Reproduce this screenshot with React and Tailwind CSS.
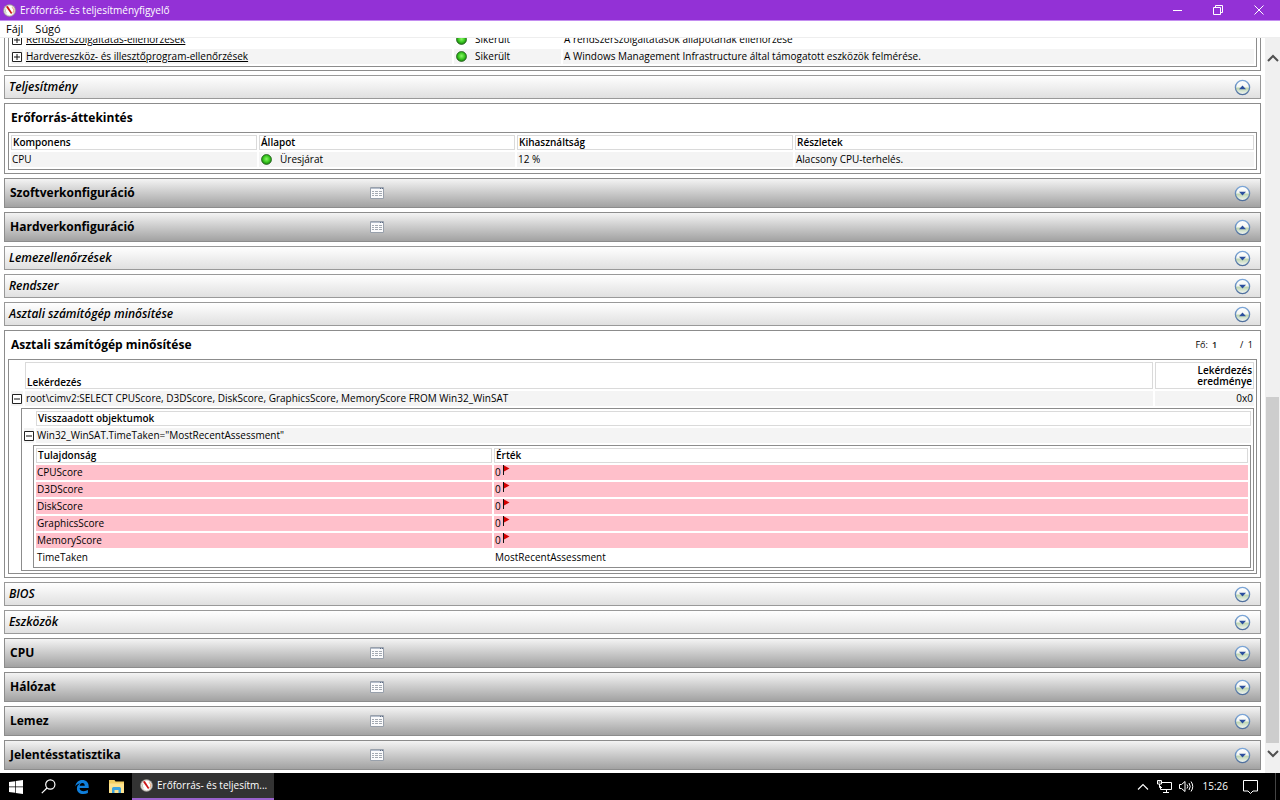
import { useState } from "react";

const checks = [
  {
    name: "Rendszerszolgáltatás-ellenőrzések",
    detail: "A rendszerszolgáltatások állapotának ellenőrzése",
  },
  {
    name: "Hardvereszköz- és illesztőprogram-ellenőrzések",
    detail: "A Windows Management Infrastructure által támogatott eszközök felmérése.",
  },
];

const scores = ["CPUScore", "D3DScore", "DiskScore", "GraphicsScore", "MemoryScore"];

function GaugeIcon({ className }) {
  return (
    <svg viewBox="0 0 14 14" className={className} aria-hidden="true">
      <circle cx="7" cy="7" r="6.5" fill="#d9d5cf" stroke="#8f8b86" strokeWidth="0.6" />
      <circle cx="7" cy="7" r="5" fill="#fff" />
      <path d="M9.8 3.4A4.6 4.6 0 0 1 10.6 9.8" fill="none" stroke="#e8a06a" strokeWidth="1" />
      <path d="M3.6 10A4.6 4.6 0 0 1 3.2 5" fill="none" stroke="#a9b5a0" strokeWidth="0.8" />
      <path d="M3.2 3 5.2 2.2 10 9.6 8.6 10.8Z" fill="#cc1414" />
    </svg>
  );
}

function StatusDot() {
  return (
    <svg viewBox="0 0 11 11" className="h-[11px] w-[11px] shrink-0" aria-hidden="true">
      <defs>
        <radialGradient id="orb" cx="0.5" cy="0.45" r="0.6">
          <stop offset="0" stopColor="#8df56a" />
          <stop offset="0.5" stopColor="#3ccc22" />
          <stop offset="1" stopColor="#12660b" />
        </radialGradient>
      </defs>
      <circle cx="5.5" cy="5.5" r="5" fill="url(#orb)" stroke="#1d5a17" strokeWidth="0.7" />
    </svg>
  );
}

function Flag() {
  return (
    <svg viewBox="0 0 7 11" className="mb-1 h-[11px] w-[7px]" aria-hidden="true">
      <path d="M0 0h1v10H0z" fill="#111" />
      <path d="M1 0.500 6.500 3.500 1 6.500Z" fill="#d40000" />
    </svg>
  );
}

function Expander({ open, label }) {
  return (
    <button type="button" aria-label={label} className="mx-auto block h-[10px] w-[10px]">
      <svg viewBox="0 0 10 10" className="h-[10px] w-[10px]">
        <path d="M0.5 0.5h9v9h-9z" fill="#fff" stroke="#222" />
        <path d={open ? "M2 5h6" : "M2 5h6M5 2v6"} stroke="#111" />
      </svg>
    </button>
  );
}

function ReportIcon() {
  return (
    <svg viewBox="0 0 14 12" className="h-3 w-[14px]" aria-hidden="true">
      <path d="M0.5 0.5h13v11h-13z" fill="#fbfbfc" stroke="#98a0ab" />
      <path d="M1 1h12v1H1z" fill="#b4bdcb" />
      <path d="M10 1h1v1h-1zM12 1h1v1h-1z" fill="#5d6b84" />
      <path
        d="M2 4.5h2M5 4.5h3M9 4.5h3M2 6.5h2M5 6.5h3M9 6.5h3M2 8.500h2M5 8.500h3M9 8.500h3"
        stroke="#a3a9b1"
        strokeWidth="1"
      />
    </svg>
  );
}

function Toggle({ title, open, onClick }) {
  return (
    <button type="button" aria-label={title} aria-expanded={open} onClick={onClick} className="ml-auto mr-[9px]">
      <svg viewBox="0 0 17 17" className="h-[17px] w-[17px]">
        <defs>
          <linearGradient id="lens" x1="0" y1="0" x2="0" y2="1">
            <stop offset="0" stopColor="#ffffff" />
            <stop offset="0.45" stopColor="#f4f7f4" />
            <stop offset="0.55" stopColor="#bfd6b2" />
            <stop offset="1" stopColor="#f4f7f8" />
          </linearGradient>
          <linearGradient id="rim" x1="0" y1="0" x2="0" y2="1">
            <stop offset="0" stopColor="#7ba6d8" />
            <stop offset="1" stopColor="#4f6f9c" />
          </linearGradient>
        </defs>
        <circle cx="8.5" cy="8.5" r="7.1" fill="url(#lens)" stroke="url(#rim)" strokeWidth="1.3" />
        <path d={open ? "M5 10.200 8.500 6.400 12 10.200Z" : "M5 6.800 8.500 10.600 12 6.800Z"} fill="#2b4f9e" />
      </svg>
    </button>
  );
}

function Section({ title, open: initial = false }) {
  const [open, setOpen] = useState(initial);
  return (
    <div className="flex h-[30px] shrink-0 items-center border border-[#8c8c8c] bg-linear-to-b from-[#f4f4f4] to-[#a2a2a2] pl-[5px]">
      <h2 className="w-[360px] text-[12px] leading-4 font-bold">{title}</h2>
      <button type="button" aria-label={`${title} jelentés`}>
        <ReportIcon />
      </button>
      <Toggle title={title} open={open} onClick={() => setOpen(!open)} />
    </div>
  );
}

function SubSection({ title, open: initial = false }) {
  const [open, setOpen] = useState(initial);
  return (
    <div className="flex h-6 shrink-0 items-center border border-[#999] bg-linear-to-b from-white to-[#e0e0e0] pl-1">
      <h3 className="text-[12px] leading-4 font-semibold italic">{title}</h3>
      <Toggle title={title} open={open} onClick={() => setOpen(!open)} />
    </div>
  );
}

function Panel({ title, extra, children }) {
  return (
    <div className="shrink-0 border border-[#8c8c8c] bg-white px-[3px] pb-[3px]">
      {title && (
        <div className="flex h-7 items-center justify-between pr-1 pl-[3px]">
          <h4 className="text-[12px] leading-4 font-bold">{title}</h4>
          {extra}
        </div>
      )}
      {children}
    </div>
  );
}

function Grid({ children }) {
  return (
    <table className="w-full table-fixed border-separate border-spacing-[2px] border border-[#8c8c8c] bg-white text-left">
      {children}
    </table>
  );
}

function Th({ children, className = "h-[15px]" }) {
  return (
    <th className={`border border-[#dadada] px-px py-0 text-[10px] leading-[11px] font-semibold ${className}`}>
      {children}
    </th>
  );
}

function Td({ children, className = "bg-[#f4f4f4]" }) {
  return (
    <td className={`h-[15px] px-px py-0 leading-[15px] whitespace-nowrap ${className}`}>{children}</td>
  );
}

function TitleBar() {
  return (
    <header className="flex h-[21px] shrink-0 items-center border-b border-[#c48df0] bg-[#9331d6] pl-[3px] text-white">
      <GaugeIcon className="h-[13px] w-[13px]" />
      <h1 className="ml-1 text-[10px] leading-4">Erőforrás- és teljesítményfigyelő</h1>
      <div className="ml-auto flex h-full">
        <button type="button" aria-label="Kis méret" className="flex w-10 items-center justify-center">
          <svg viewBox="0 0 10 10" className="h-[10px] w-[10px]" stroke="#fff" fill="none">
            <path d="M0 5.5h9" />
          </svg>
        </button>
        <button type="button" aria-label="Előző méret" className="flex w-10 items-center justify-center">
          <svg viewBox="0 0 10 10" className="h-[10px] w-[10px]" stroke="#fff" fill="none">
            <path d="M0.5 2.5h7v7h-7zM2.5 2.5v-2h7v7h-2" />
          </svg>
        </button>
        <button type="button" aria-label="Bezárás" className="flex w-[42px] items-center justify-center">
          <svg viewBox="0 0 10 10" className="h-[10px] w-[10px]" stroke="#fff" fill="none">
            <path d="M0.5 0.5l9 9M9.5 0.5l-9 9" />
          </svg>
        </button>
      </div>
    </header>
  );
}

function ScrollBar() {
  return (
    <div className="flex w-[15px] shrink-0 flex-col items-center bg-[#f0f0f0] pt-[14px]">
      <button type="button" aria-label="Görgetés fel" className="flex h-3 w-full items-center justify-center">
        <svg viewBox="0 0 12 8" className="h-2 w-3" fill="none" stroke="#505050" strokeWidth="2">
          <path d="M1 7 6 2 11 7" />
        </svg>
      </button>
      <div className="flex w-full flex-1 flex-col justify-end px-px">
        <div className="h-[51%] bg-[#cdcdcd]"></div>
      </div>
      <button type="button" aria-label="Görgetés le" className="flex h-[30px] w-full items-start justify-center pt-[7px]">
        <svg viewBox="0 0 12 8" className="h-2 w-3" fill="none" stroke="#505050" strokeWidth="2">
          <path d="M1 1 6 6 11 1" />
        </svg>
      </button>
    </div>
  );
}

function TaskBar() {
  return (
    <footer className="flex h-[27px] shrink-0 items-center bg-black text-[10px] text-white">
      <button type="button" aria-label="Start" className="flex h-full w-8 items-center justify-center">
        <svg viewBox="0 0 14 14" className="h-[14px] w-[14px]" fill="#fff">
          <path d="M0 2 6 1.2V6.6H0zM6.7 1.1 14 0v6.6H6.7zM0 7.3h6v5.5L0 12zM6.7 7.3H14V14L6.7 12.9z" />
        </svg>
      </button>
      <button type="button" aria-label="Keresés" className="flex h-full w-8 items-center justify-center">
        <svg viewBox="0 0 15 15" className="h-[15px] w-[15px]" fill="none" stroke="#fff" strokeWidth="1.2">
          <circle cx="9.3" cy="5.5" r="4.6" />
          <path d="M6 9 0.8 14.2" />
        </svg>
      </button>
      <button type="button" aria-label="Microsoft Edge" className="flex h-full w-9 items-center justify-center">
        <svg viewBox="0 0 14 14" className="h-[14px] w-[14px]">
          <path
            d="M0.3 6.4C0.8 2.6 3.6 0 7.3 0c4 0 6.4 2.7 6.4 6.4v1.7H4.6c.1 2.2 2 3.1 4.2 3.1 1.5 0 2.9-.4 4.1-1.1v3C11.700 13.700 10.200 14 8.400 14 4.400 14 1.900 11.900 1.900 8.400c0-2.200 1.200-3.900 3.200-4.900C2.900 3.700 1.200 4.800.3 6.400zM4.700 5.700h5.100c0-1.700-.8-2.800-2.400-2.800-1.500 0-2.500 1.200-2.700 2.800z"
            fill="#0f7fdc"
          />
        </svg>
      </button>
      <button type="button" aria-label="Fájlkezelő" className="flex h-full w-8 items-center justify-center">
        <svg viewBox="0 0 15 13" className="h-[13px] w-[15px]">
          <path d="M0 0h5.500l1 1.500H15V13H0z" fill="#f3cf63" />
          <path d="M0 3.500h15V13H0z" fill="#fde38f" />
          <path d="M3 13V8.500Q3 7 4.500 7h6Q12 7 12 8.500V13h-2.500v-3h-4v3z" fill="#3ba3e0" />
        </svg>
      </button>
      <button
        type="button"
        className="flex h-full w-[142px] items-center gap-1 border-b-2 border-[#9a62cc] bg-[#333] pl-2"
      >
        <GaugeIcon className="h-[13px] w-[13px] shrink-0" />
        <span className="whitespace-nowrap">Erőforrás- és teljesítm...</span>
      </button>
      <div className="ml-auto flex h-full items-center">
        <button type="button" aria-label="Rejtett ikonok" className="mr-2">
          <svg viewBox="0 0 12 12" className="h-3 w-3" fill="none" stroke="#fff" strokeWidth="1.1">
            <path d="M1 8.500 6 3.500 11 8.500" />
          </svg>
        </button>
        <button type="button" aria-label="Hálózat" className="mr-[7px]">
          <svg viewBox="0 0 15 13" className="h-[13px] w-[15px]" fill="none" stroke="#fff">
            <path d="M5 2.500h9.500v7H3.500V6M9.500 9.500v3M6 12.500h6" />
            <path d="M0.500 0.500h4v3.500h-4zM1.500 2h2M2.500 4v3.500H5" />
          </svg>
        </button>
        <button type="button" aria-label="Hangerő" className="mr-[9px]">
          <svg viewBox="0 0 15 13" className="h-[13px] w-[15px]" fill="none" stroke="#fff">
            <path d="M0.500 4.500h2L6 1.500v10L2.500 8.500h-2zM8 4.500q1.500 2 0 4M10 3q2.500 3.500 0 7M12 1.500q3.500 5 0 10" />
          </svg>
        </button>
        <time className="mr-[15px]">15:26</time>
        <button type="button" aria-label="Értesítések" className="mr-[17px]">
          <svg viewBox="0 0 15 14" className="h-[14px] w-[15px]" fill="none" stroke="#fff">
            <path d="M0.500 0.500h14v10.500H10L7.500 13.500 5 11H0.500z" />
          </svg>
        </button>
        <div className="h-full w-[5px] border-l border-[#444]"></div>
      </div>
    </footer>
  );
}

function App() {
  return (
    <div className="flex h-screen flex-col overflow-hidden bg-white font-['Open_Sans','Noto_Sans',sans-serif] text-[11px] text-black">
      <TitleBar />
      <nav className="flex h-[17px] shrink-0 items-center gap-3 border-b border-[#eee] pl-[6px] leading-4">
        <button type="button">Fájl</button>
        <button type="button">Súgó</button>
      </nav>

      <div className="flex min-h-0 flex-1">
        <main className="flex min-w-0 flex-1 flex-col justify-end gap-1 overflow-hidden px-1 pb-[3px] text-[10px]">
          <Panel>
            <Grid>
              <colgroup>
                <col className="w-3" />
                <col className="w-[427px]" />
                <col className="w-[107px]" />
                <col />
              </colgroup>
              <tbody>
                {checks.map((check, i) => (
                  <tr key={check.name} className={i % 2 ? "bg-[#f4f4f4]" : ""}>
                    <Td className="">
                      <Expander label={check.name} />
                    </Td>
                    <Td className="">
                      <a href="#" className="underline">{check.name}</a>
                    </Td>
                    <Td className="">
                      <span className="flex items-center gap-2 pl-px">
                        <StatusDot />
                        Sikerült
                      </span>
                    </Td>
                    <Td className="">{check.detail}</Td>
                  </tr>
                ))}
              </tbody>
            </Grid>
          </Panel>

          <SubSection title="Teljesítmény" open />
          <Panel title="Erőforrás-áttekintés">
            <Grid>
              <colgroup>
                <col className="w-[246px]" />
                <col className="w-[256px]" />
                <col className="w-[276px]" />
                <col />
              </colgroup>
              <thead>
                <tr>
                  <Th>Komponens</Th>
                  <Th>Állapot</Th>
                  <Th>Kihasználtság</Th>
                  <Th>Részletek</Th>
                </tr>
              </thead>
              <tbody>
                <tr>
                  <Td>CPU</Td>
                  <Td>
                    <span className="flex items-center gap-2 pl-px">
                      <StatusDot />
                      Üresjárat
                    </span>
                  </Td>
                  <Td>12 %</Td>
                  <Td>Alacsony CPU-terhelés.</Td>
                </tr>
              </tbody>
            </Grid>
          </Panel>

          <Section title="Szoftverkonfiguráció" />
          <Section title="Hardverkonfiguráció" open />
          <SubSection title="Lemezellenőrzések" />
          <SubSection title="Rendszer" />
          <SubSection title="Asztali számítógép minősítése" open />

          <Panel
            title="Asztali számítógép minősítése"
            extra={
              <div className="flex items-center text-[9px] leading-3">
                <label htmlFor="top">Fő:</label>
                <input id="top" defaultValue="1" className="ml-1 w-6 font-semibold text-[#111]" />
                <span className="ml-1">/&nbsp; 1</span>
              </div>
            }
          >
            <Grid>
              <colgroup>
                <col className="w-3" />
                <col />
                <col className="w-[99px]" />
              </colgroup>
              <thead>
                <tr>
                  <td></td>
                  <Th className="h-[27px] align-bottom">Lekérdezés</Th>
                  <Th className="h-[27px] text-right">Lekérdezés eredménye</Th>
                </tr>
              </thead>
              <tbody>
                <tr>
                  <Td>
                    <Expander open label="Lekérdezés" />
                  </Td>
                  <Td>
                    root\cimv2:SELECT CPUScore, D3DScore, DiskScore, GraphicsScore, MemoryScore FROM Win32_WinSAT
                  </Td>
                  <Td className="bg-[#f4f4f4] text-right">0x0</Td>
                </tr>
                <tr>
                  <td colSpan={3} className="p-0 pl-[10px]">
                    <Grid>
                      <colgroup>
                        <col className="w-[10px]" />
                        <col />
                      </colgroup>
                      <thead>
                        <tr>
                          <td></td>
                          <Th>Visszaadott objektumok</Th>
                        </tr>
                      </thead>
                      <tbody>
                        <tr>
                          <td className="h-[15px] bg-[#f4f4f4] p-0">
                            <Expander open label="Visszaadott objektumok" />
                          </td>
                          <Td>Win32_WinSAT.TimeTaken="MostRecentAssessment"</Td>
                        </tr>
                        <tr>
                          <td colSpan={2} className="p-0 pl-[9px]">
                            <Grid>
                              <colgroup>
                                <col className="w-[456px]" />
                                <col />
                              </colgroup>
                              <thead>
                                <tr>
                                  <Th>Tulajdonság</Th>
                                  <Th>Érték</Th>
                                </tr>
                              </thead>
                              <tbody>
                                {scores.map((score) => (
                                  <tr key={score}>
                                    <Td className="bg-[#ffc0cb]">{score}</Td>
                                    <Td className="bg-[#ffc0cb]">
                                      <span className="flex h-[15px] items-center gap-[2px]">
                                        0
                                        <Flag />
                                      </span>
                                    </Td>
                                  </tr>
                                ))}
                                <tr>
                                  <Td className="">TimeTaken</Td>
                                  <Td className="">MostRecentAssessment</Td>
                                </tr>
                              </tbody>
                            </Grid>
                          </td>
                        </tr>
                      </tbody>
                    </Grid>
                  </td>
                </tr>
              </tbody>
            </Grid>
          </Panel>

          <SubSection title="BIOS" />
          <SubSection title="Eszközök" />
          <Section title="CPU" />
          <Section title="Hálózat" />
          <Section title="Lemez" />
          <Section title="Jelentésstatisztika" />
        </main>
        <ScrollBar />
      </div>

      <TaskBar />
    </div>
  );
}

export default App;
